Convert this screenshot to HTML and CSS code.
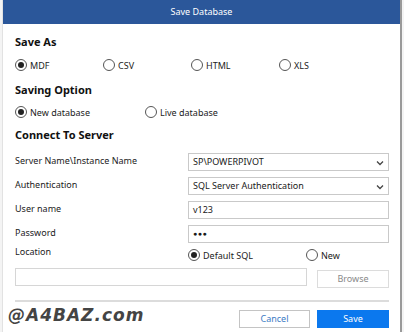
FILE: index.html
```html
<!DOCTYPE html>
<html>
<head>
  <link rel="stylesheet" href="styles.css">
</head>
<body>

<div class="dialog">
  <div class="title-bar">Save Database</div>

  <div class="dialog-body">
    <h2 class="section-title">Save As</h2>
    <div class="radio-row format-row">
      <label class="radio checked"><span class="dot"></span>MDF</label>
      <label class="radio"><span class="dot"></span>CSV</label>
      <label class="radio"><span class="dot"></span>HTML</label>
      <label class="radio"><span class="dot"></span>XLS</label>
    </div>

    <h2 class="section-title option-title">Saving Option</h2>
    <div class="radio-row saving-row">
      <label class="radio checked"><span class="dot"></span>New database</label>
      <label class="radio"><span class="dot"></span>Live database</label>
    </div>

    <h2 class="section-title server-title">Connect To Server</h2>
    <div class="form-grid">
      <span class="field-label">Server Name\Instance Name</span>
      <div class="field select">SP\POWERPIVOT
        <svg class="chevron" width="8" height="6" viewBox="0 0 8 6"><path d="M1 1.5 L4 4.5 L7 1.5" fill="none" stroke="#444" stroke-width="1.3"/></svg>
      </div>

      <span class="field-label">Authentication</span>
      <div class="field select">SQL Server Authentication
        <svg class="chevron" width="8" height="6" viewBox="0 0 8 6"><path d="M1 1.5 L4 4.5 L7 1.5" fill="none" stroke="#444" stroke-width="1.3"/></svg>
      </div>

      <span class="field-label">User name</span>
      <div class="field">v123</div>

      <span class="field-label">Password</span>
      <div class="field password">&#9679;&#9679;&#9679;</div>

      <span class="field-label location-label">Location</span>
      <div class="location-options">
        <label class="radio checked"><span class="dot"></span>Default SQL</label>
        <label class="radio"><span class="dot"></span>New</label>
      </div>
    </div>

    <div class="path-row">
      <div class="path-input"></div>
      <div class="btn btn-browse">Browse</div>
    </div>

    <div class="separator"></div>

    <div class="actions">
      <div class="btn btn-cancel">Cancel</div>
      <div class="btn btn-save">Save</div>
    </div>
  </div>

  <div class="watermark">@A4BAZ.com</div>
</div>

</body>
</html>
```

FILE: styles.css
```css
body {
  margin: 0;
  background: #f4f4f4;
  font-family: "Noto Sans", "Open Sans", sans-serif;
  font-size: 9px;
  color: #222;
}

.dialog {
  position: relative;
  margin-left: 2px;
  width: 400px;
  height: 332px;
  box-sizing: border-box;
  background: #fff;
  border-left: 1px solid #e2e2e2;
  border-right: 2px solid #9a9a9a;
}

.title-bar {
  height: 24px;
  line-height: 24px;
  background: #2b579a;
  color: #fff;
  text-align: center;
  font-size: 9px;
}

.dialog-body {
  padding: 10px 11px 0 12px;
}

/* Section headings */
.section-title {
  margin: 0;
  height: 16px;
  line-height: 16px;
  font-size: 11px;
  font-weight: bold;
  color: #111;
}

.option-title {
  margin-top: 9px;
}

.server-title {
  margin-top: 7px;
}

/* Radio buttons */
.radio-row {
  display: flex;
  height: 16px;
  align-items: center;
}

.format-row {
  margin-top: 7px;
}

.format-row .radio {
  width: 88px;
}

.saving-row {
  margin-top: 6px;
}

.saving-row .radio {
  width: 130px;
}

.radio {
  display: flex;
  align-items: center;
  white-space: nowrap;
}

.radio .dot {
  position: relative;
  width: 10px;
  height: 10px;
  margin-right: 3px;
  border: 1px solid #555;
  border-radius: 50%;
  background: #fff;
}

.radio.checked .dot::after {
  content: "";
  position: absolute;
  left: 2px;
  top: 2px;
  width: 6px;
  height: 6px;
  border-radius: 50%;
  background: #222;
}

/* Connection form */
.form-grid {
  display: grid;
  grid-template-columns: 173px minmax(0, 1fr);
  grid-template-rows: 18px 18px 18px 18px 16px;
  row-gap: 6px;
  margin-top: 10px;
  align-items: center;
}

.field-label {
  margin-top: -3px;
}

.field {
  position: relative;
  height: 18px;
  line-height: 16px;
  box-sizing: border-box;
  padding: 0 4px;
  border: 1px solid #c9c9c9;
  color: #1a1a1a;
}

.password {
  font-size: 7px;
  letter-spacing: 0.5px;
}

.chevron {
  position: absolute;
  right: 4px;
  top: 6px;
}

.location-label {
  margin-top: -12px;
}

.location-options {
  display: flex;
  margin-top: -4px;
}

.location-options .radio:first-child {
  width: 118px;
}

/* Path + browse */
.path-row {
  display: flex;
  gap: 10px;
  margin-top: 3px;
}

.path-input {
  width: 292px;
  height: 18px;
  box-sizing: border-box;
  border: 1px solid #d6d6d6;
}

.btn {
  width: 72px;
  height: 18px;
  line-height: 16px;
  box-sizing: border-box;
  text-align: center;
  border: 1px solid #d0d0d0;
}

.btn-browse {
  margin-top: 2px;
  color: #8a8a8a;
  border-color: #dcdcdc;
}

.separator {
  margin-top: 12px;
  height: 2px;
  background: #dcdcdc;
}

.actions {
  display: flex;
  justify-content: flex-end;
  gap: 7px;
  margin-top: 8px;
}

.btn-cancel {
  width: 71px;
  color: #3b7cc4;
  border-color: #c4c4c4;
}

.btn-save {
  background: #0b78ee;
  border-color: #0b78ee;
  color: #fff;
}

.watermark {
  position: absolute;
  left: 5px;
  top: 305px;
  font-family: "DejaVu Sans", sans-serif;
  font-size: 17px;
  font-weight: bold;
  font-style: oblique;
  letter-spacing: 1px;
  color: #444;
}
```
